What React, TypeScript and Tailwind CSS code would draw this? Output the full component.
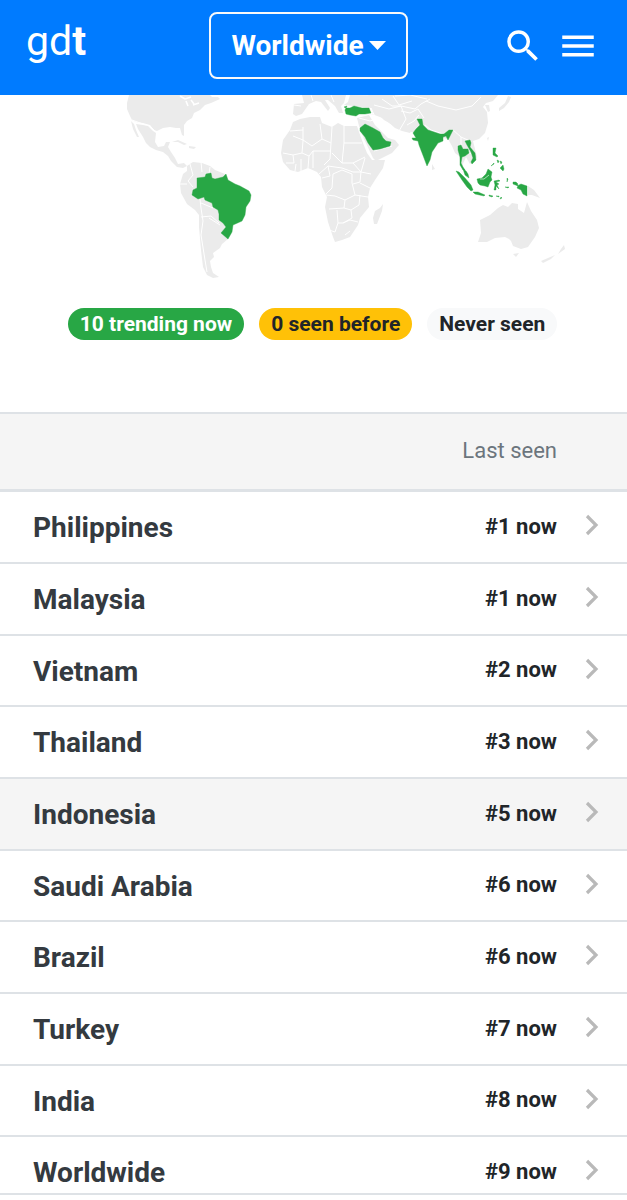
import { MdMenu, MdSearch } from "react-icons/md";

interface Region {
  name: string;
  rank: number;
  highlighted?: boolean;
}

const regions: Region[] = [
  { name: "Philippines", rank: 1 },
  { name: "Malaysia", rank: 1 },
  { name: "Vietnam", rank: 2 },
  { name: "Thailand", rank: 3 },
  { name: "Indonesia", rank: 5, highlighted: true },
  { name: "Saudi Arabia", rank: 6 },
  { name: "Brazil", rank: 6 },
  { name: "Turkey", rank: 7 },
  { name: "India", rank: 8 },
  { name: "Worldwide", rank: 9 },
];

const land = [
  // USA and Canada
  "M129 95L127 103 127 109 130 116 132 120 136 122 143 123 150 125 154 130 157 131 163 128 170 127 176 128 180 128 182 135 184 136 184 125 187 121 192 118 194 113 200 110 205 105 211 103 220 99 218 97 212 97 210 95Z",
  // Mexico and Central America
  "M136 124L143 125 148 126 153 131 156 133 155 142 158 147 164 146 166 142 170 142 168 147 171 152 175 158 178 164 184 163 187 166 183 168 177 167 171 161 168 156 163 152 156 150 150 147 146 143 143 137 138 129Z",
  "M131 121L134 124 136 130 139 137 137 137 133 129Z",
  // Caribbean
  "M172 142L178 140 187 144 184 145 178 142Z",
  "M189 146L196 147 194 149 189 148Z",
  // South America
  "M187 166L193 162 202 163 210 166 215 170 225 174 228 180 224 190 226 222 228 239 222 244 220 248 213 253 214 257 210 261 211 267 213 273 219 277 213 278 207 275 203 267 201 250 199 227 199 215 195 210 187 204 181 193 180 184 183 174 187 171Z",
  // Africa
  "M293 122L300 119 310 117 320 117 322 123 332 127 338 123 344 126 357 126 359 132 363 143 367 153 372 160 385 160 383 168 375 180 370 188 368 197 369 207 360 218 358 225 350 237 342 240 335 242 333 237 328 222 325 207 327 197 322 187 321 177 317 172 308 168 298 172 290 170 283 162 281 153 283 140 290 130Z",
  "M383 204L382 211 377 224 374 224 373 218 375 211 380 208Z",
  // Europe
  "M294 104L304 103 302 95 346 95 344 103 341 106 343 113 339 113 335 106 328 100 325 100 330 108 328 111 321 102 316 101 309 104 302 114 296 116 293 114Z",
  // Middle East
  "M358 116L372 114 385 119 395 128 402 131 410 133 414 127 404 96 350 95 348 102 344 105 371 108 373 114 359 116Z",
  "M357 118L369 115 375 125 382 132 388 138 395 140 399 145 392 153 376 161 373 158 364 139 359 126Z",
  // Central and East Asia
  "M368 95L498 95 493 101 486 103 483 107 487 112 488 123 485 133 479 139 473 141 475 149 477 157 470 164 466 157 462 166 459 156 455 153 452 146 448 139 438 137 427 133 410 132 396 127 384 120 374 110Z",
  "M485 105L489 105 490 111 488 112Z",
  "M499 111L504 108 509 102 511 97 508 96 505 103 499 108Z",
  "M487 138L489 137 488 141Z",
  "M432 164L435 169 432 170Z",
  // Oceania
  "M528 186L534 190 540 198 532 195 528 195Z",
  "M480 220L490 215 498 208 503 205 508 207 512 203 518 204 518 209 524 213 527 202 531 211 537 220 539 228 535 237 528 247 521 249 513 246 511 241 509 239 505 237 495 238 487 242 478 242 481 233Z",
  "M513 254L519 253 516 257Z",
  "M564 245L565 249 558 254 561 249Z",
  "M541 261L555 255 551 259 543 263Z",
];

const lakes = "M180 96L185 99 191 97M186 101L188 106M191 100L194 104M193 105L199 103";

const borders = [
  // Americas
  "M132 120L143 124 150 126 156 132M190 164L193 175 188 181 193 187M180 184L187 184M200 199L201 208 203 221 201 235 205 260 207 272M201 217L211 216 219 223M201 203L213 208M209 218L220 225M201 162L202 172M210 167L209 174",
  // Africa
  "M293 136L303 140 312 146 322 139 320 124M290 131L303 130M303 127L303 141M322 139L331 143 332 127M344 126L344 143M344 143L362 143M331 143L330 159 324 165M303 141L302 153 293 155 283 153M293 155L294 163 286 163M302 153L309 156 313 151 330 151M309 156L308 168M301 159L301 171M296 164L295 171M313 151L313 168M332 153L342 163 353 163 365 157M344 143L342 163M319 174L328 166 342 168 353 172 361 172 365 158M353 163L361 172 371 174M328 166L330 176 322 178M333 174L332 188 326 194M333 174L342 170 352 174 352 183 355 195 345 200 335 196 326 195M361 172L360 182 353 184M370 188L360 183M355 195L368 197M345 200L344 208 329 209M344 208L351 210 359 205 360 195M351 210L352 218 343 223 338 223 337 210M338 223L335 232 329 230M343 223L350 220 358 222M345 235L350 231",
  // Europe and Asia
  "M294 105L301 106M311 95L313 101M331 95L334 102M371 108L376 119 382 127M359 118L370 121 379 118M374 105L389 109 401 106 406 119 399 131M382 99L392 106 401 106 415 109 421 104 430 99M393 96L399 105 412 101M401 111L410 113 418 109 424 118M407 125L414 121 419 115M426 101L438 106 456 110 472 106 481 97M425 125L431 130 443 134M446 137L453 130 461 137 470 141M461 137L461 147 474 156M374 151L392 146M395 96L410 95 427 99",
];

const trending = [
  // Brazil
  "M197 178L205 177 206 174 211 173 212 178 215 179 223 177 226 174 228 180 235 184 240 186 249 191 251 195 250 201 246 207 245 215 242 221 233 225 232 232 228 239 221 233 226 227 223 223 219 220 219 214 218 210 213 207 212 203 205 200 204 197 198 199 192 195 193 190 197 188Z",
  // Turkey
  "M345 110L346 108 350 108 354 106 358 107 362 108 369 108 371 113 365 114 359 114 356 116 350 115 346 114Z",
  "M344 107L347 106 346 108Z",
  // Saudi Arabia
  "M360 128L365 124 373 128 380 132 383 138 386 141 391 142 390 146 380 149 373 150 368 143 365 137 360 131Z",
  // India
  "M417 119L422 119 423 125 428 130 440 134 444 134 449 130 453 130 451 134 448 140 446 136 443 137 443 141 438 143 432 152 430 160 427 166 424 158 419 145 418 141 413 140 412 138 416 138 413 133 416 129 420 125Z",
  // Thailand
  "M458 146L461 145 463 149 468 149 469 153 465 156 462 157 461 163 463 167 465 170 463 170 460 165 460 157 458 150Z",
  // Vietnam
  "M465 141L470 140 471 143 470 147 475 153 476 160 472 164 471 162 473 158 471 152 467 145Z",
  // Malaysia
  "M463 169L466 171 468 174 469 178 465 175Z",
  // Indonesia
  "M456 171L459 172 465 178 471 185 473 190 471 191 467 187 462 180Z",
  "M473 192L478 192 485 195 484 196 475 194Z",
  "M477 179L482 178 486 174 488 169 492 172 491 177 492 180 490 182 488 187 485 186 480 185 478 183Z",
  "M494 181L499 180 500 181 496 182 499 184 497 185 499 189 496 186 496 190 494 190 495 185Z",
  "M489 195L493 196 492 197 489 196ZM496 196L499 196 499 197ZM501 197L502 198 500 199ZM507 178L508 179 507 182ZM505 187L509 187 508 188Z",
  "M513 182L516 182 518 184 517 186 521 184 527 186 527 196 523 194 521 190 517 188 518 186 513 184Z",
  // Philippines
  "M493 148L496 148 495 153 498 156 497 157 493 155ZM491 166L494 163 494 164ZM497 160L499 161 498 163ZM500 161L502 162 501 164ZM500 168L503 165 504 169 503 171 501 169Z",
];

function WorldMap() {
  return (
    <svg viewBox="0 95 627 190" className="block w-full" role="img" aria-label="World map of trending regions">
      <g fill="#ebebeb">
        {land.map((d) => (
          <path key={d} d={d} />
        ))}
      </g>
      <g fill="none" stroke="#fff" strokeWidth="1" strokeLinejoin="round">
        <path d={lakes} strokeWidth="1.6" />
        {borders.map((d) => (
          <path key={d} d={d} />
        ))}
      </g>
      <g fill="#28a745" stroke="#28a745" strokeWidth="0.4" strokeLinejoin="round">
        {trending.map((d) => (
          <path key={d} d={d} />
        ))}
      </g>
      <path d="M480 179L484 179 489 175" fill="none" stroke="#fff" strokeWidth="0.6" />
    </svg>
  );
}

function Header() {
  return (
    <header className="grid shrink-0 grid-cols-[1fr_auto_1fr] items-center bg-[#007bff] pt-3 pr-7 pb-4 pl-[18px] text-white">
      <a href="#home" className="pb-2 pl-2 text-[41px] leading-none font-normal">
        gd<span className="font-bold">t</span>
      </a>
      <button
        type="button"
        className="flex h-[67px] items-center gap-[5px] rounded-lg border-2 border-[#f8f9fa] px-5 text-[28px] font-bold"
      >
        Worldwide
        <svg viewBox="0 0 17 9" className="h-[9px] w-[17px]" fill="currentColor" aria-hidden="true">
          <path d="M0 0H17L8.5 9Z" />
        </svg>
      </button>
      <div className="flex items-center justify-end gap-[13px]">
        <button type="button" aria-label="Search">
          <MdSearch size={42} />
        </button>
        <button type="button" aria-label="Menu">
          <MdMenu size={42} />
        </button>
      </div>
    </header>
  );
}

export default function App() {
  return (
    <div className="flex h-screen flex-col overflow-hidden bg-white font-['Roboto',sans-serif] text-[#212529]">
      <Header />

      <main className="min-h-0 flex-1 overflow-hidden">
        <WorldMap />

        <div className="flex justify-center gap-[15px] pt-[23px] pr-[2px] pb-[72px] text-[21px] leading-8 font-bold whitespace-nowrap">
          <span className="rounded-full bg-[#28a745] px-3 text-white">10 trending now</span>
          <span className="rounded-full bg-[#ffc107] px-3">0 seen before</span>
          <span className="rounded-full bg-[#f8f9fa] px-3">Never seen</span>
        </div>

        <table className="w-full border-separate border-spacing-0">
          <thead>
            <tr className="h-20 bg-[#f5f5f5] text-[22px] text-[#6c757d]">
              <th className="border-t-2 border-b-3 border-[#dee2e6]" aria-label="Region" />
              <th className="border-t-2 border-b-3 border-[#dee2e6] pb-[2px] text-right font-normal">
                Last seen
              </th>
              <th className="w-[70px] border-t-2 border-b-3 border-[#dee2e6]" aria-label="Details" />
            </tr>
          </thead>
          <tbody>
            {regions.map((region) => (
              <tr
                key={region.name}
                className={
                  region.highlighted
                    ? "h-[72px] bg-[#f5f5f5] nth-[3n]:h-[71px]"
                    : "h-[72px] nth-[3n]:h-[71px]"
                }
              >
                <td className="border-b-2 border-[#dee2e6] pt-[2px] pl-[33px] text-[28px] font-bold text-[#343a40]">
                  <a href={`#${region.name}`}>{region.name}</a>
                </td>
                <td className="border-b-2 border-[#dee2e6] pb-[2px] text-right text-[22px] font-bold">
                  #{region.rank} now
                </td>
                <td className="border-b-2 border-[#dee2e6] pl-7">
                  <svg viewBox="0 0 14 22" className="mb-1 h-[22px] w-[14px]" aria-hidden="true">
                    <path d="M2 2L11 11 2 20" fill="none" stroke="#b9b9b9" strokeWidth="3.2" />
                  </svg>
                </td>
              </tr>
            ))}
          </tbody>
        </table>
      </main>

      <footer className="h-[7px] shrink-0 border-t-2 border-[#dee2e6] bg-white" />
    </div>
  );
}
